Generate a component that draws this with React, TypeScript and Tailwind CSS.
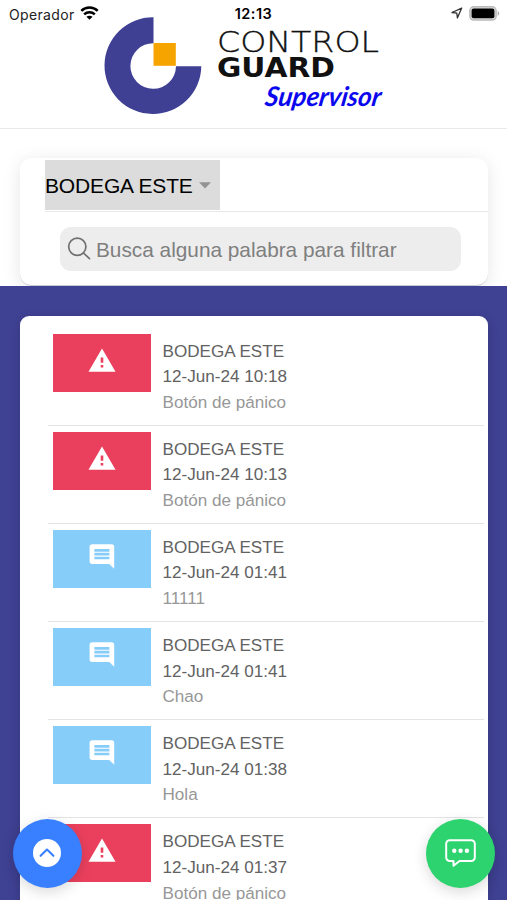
type Alert = { kind: "panic" | "note"; place: string; date: string; detail: string };

const alerts: Alert[] = [
  { kind: "panic", place: "BODEGA ESTE", date: "12-Jun-24 10:18", detail: "Botón de pánico" },
  { kind: "panic", place: "BODEGA ESTE", date: "12-Jun-24 10:13", detail: "Botón de pánico" },
  { kind: "note", place: "BODEGA ESTE", date: "12-Jun-24 01:41", detail: "11111" },
  { kind: "note", place: "BODEGA ESTE", date: "12-Jun-24 01:41", detail: "Chao" },
  { kind: "note", place: "BODEGA ESTE", date: "12-Jun-24 01:38", detail: "Hola" },
  { kind: "panic", place: "BODEGA ESTE", date: "12-Jun-24 01:37", detail: "Botón de pánico" },
];

function StatusBar() {
  return (
    <div className="absolute inset-x-0 top-0 grid h-7 grid-cols-3 items-center pl-[9px] pr-[7px] font-['Inter',sans-serif] text-[14px] text-[#222]">
      <div className="flex items-center gap-[5px]">
        <span className="tracking-[0.35px]">Operador</span>
        <svg width="19" height="14" viewBox="0 0 20 15" fill="none" stroke="#000" strokeWidth="2.7" className="-mt-[3px]">
          <path d="M1.2 5.2C6.2.4 13.8.4 18.8 5.2" />
          <path d="M4.3 8.9c3.2-3 8.2-3 11.4 0" />
          <path d="M10 14.6 6.7 11.6c1.8-1.6 4.8-1.6 6.6 0z" fill="#000" stroke="none" />
        </svg>
      </div>
      <span className="-ml-[2px] text-center text-[14.5px] font-semibold tracking-[0.5px] text-black">12:13</span>
      <div className="-mt-[2px] flex items-center justify-end gap-[6px]">
        <svg width="12" height="12" viewBox="0 0 12 12" fill="none" stroke="#333" strokeWidth="1.3" strokeLinejoin="round">
          <path d="M10.7 1.1 1 5.5l4.8.7.6 4.7z" />
        </svg>
        <svg width="31" height="15" viewBox="0 0 31 15">
          <rect x=".9" y=".8" width="26.2" height="13.2" rx="3.8" fill="#ddd" stroke="#bbb" strokeWidth="1.5" />
          <rect x="2.6" y="2.6" width="22.8" height="9.6" rx="2" />
          <path d="M28.6 5c2.2.8 2.2 4 0 4.8z" fill="#b2b2b2" />
        </svg>
      </div>
    </div>
  );
}

function Brand() {
  return (
    <svg width="290" height="104" viewBox="100 14 290 104" className="mt-[14px] ml-[100px]">
      <path d="M153.5 17.2A48.4 48.4 0 1 0 201.3 66.2H176A22.8 22.8 0 1 1 153.5 43.2z" fill="#3f4094" />
      <rect x="153.5" y="43" width="22.3" height="22.8" fill="#f5a400" />
      <g fill="#111">
        <text x="217" y="52" fontFamily="DejaVu Sans" fontWeight="200" fontSize="28.5" textLength="162" lengthAdjust="spacingAndGlyphs" stroke="#111" strokeWidth=".35">CONTROL</text>
        <text x="217" y="76.8" fontFamily="DejaVu Sans" fontWeight="700" fontSize="26.8" textLength="118" lengthAdjust="spacingAndGlyphs">GUARD</text>
      </g>
      <g transform="translate(264 105.5) skewX(-9)">
        <text fontFamily="Lato, cursive" fontStyle="italic" fontWeight="700" fontSize="27" textLength="116" lengthAdjust="spacingAndGlyphs" fill="#0b08ee">Supervisor</text>
      </g>
    </svg>
  );
}

function PanicIcon() {
  return (
    <svg width="28" height="24" viewBox="0 0 28 24" fill="#fff" className="mt-[14px]">
      <path fillRule="evenodd" d="M14 .6.5 23.8h27zM12.7 9.4h2.6v5.3h-2.6zm0 7.5h2.6v2.6h-2.6z" />
    </svg>
  );
}

function NoteIcon() {
  return (
    <svg width="26" height="25" viewBox="0 0 26 25" className="mt-[14px]">
      <path d="M3.2.3h19.4a2.6 2.6 0 0 1 2.6 2.6v21.8l-5-4.8h-17A2.6 2.6 0 0 1 .6 17.3V2.9A2.6 2.6 0 0 1 3.2.3z" fill="#fff" />
      <path d="M5.4 6.4h15M5.4 10.2h15M5.4 14h15" stroke="#87cdfa" strokeWidth="2.7" />
    </svg>
  );
}

function AlertRow({ alert, last }: { alert: Alert; last: boolean }) {
  return (
    <li className="flex h-[98.1px] shrink-0">
      <div
        className={
          alert.kind === "panic"
            ? "flex h-[58.5px] w-[97.5px] items-start justify-center bg-[#eb405d]"
            : "flex h-[58.5px] w-[97.5px] items-start justify-center bg-[#87cdfa]"
        }
      >
        {alert.kind === "panic" ? <PanicIcon /> : <NoteIcon />}
      </div>
      <div className="relative flex-1 pl-3 pt-[5px] text-[17.1px] leading-[25.8px] text-[#626262]">
        <p>{alert.place}</p>
        <p>{alert.date}</p>
        <p className="text-[#979797]">{alert.detail}</p>
        {!last && <span className="absolute -left-[103px] right-[4px] top-[91px] h-px bg-[#e4e4e4]" />}
      </div>
    </li>
  );
}

export default function App() {
  return (
    <div className="relative flex h-[900px] w-[507px] flex-col overflow-hidden bg-white font-['Liberation_Sans',Arial,sans-serif]">
      <header className="h-[129px] shrink-0 border-b border-[#e9e9e9]">
        <Brand />
      </header>
      <StatusBar />

      <section className="h-[157px] shrink-0 overflow-hidden px-5 pt-[29px]">
        <div className="h-[128px] w-[467.5px] rounded-xl border-b border-[#c9c9d8] bg-white shadow-[0_3px_18px_rgba(0,0,0,0.1)]">
          <div className="ml-[25px] flex h-[54px] items-start border-b border-[#e8e8e8] pt-[2px]">
            <button className="flex h-[50px] w-[175px] items-center gap-[6px] bg-[#dcdcdc] pt-[1px] text-[21px] whitespace-nowrap text-black">
              <span className="tracking-[-0.15px]">BODEGA ESTE</span>
              <svg width="12" height="7" viewBox="0 0 12 7" className="shrink-0">
                <path d="M0 .3h12L6 6.5z" fill="#939393" />
              </svg>
            </button>
          </div>
          <div className="mt-[15px] ml-[39.5px] flex h-[44px] w-[401px] items-center rounded-[11px] bg-[#ededed] pl-[7.5px] text-[20.8px] text-[#7f7f7f]">
            <svg width="24" height="24" viewBox="0 0 24 24" fill="none" stroke="#707070" strokeWidth="1.7" strokeLinecap="round">
              <circle cx="10.3" cy="9.8" r="8.6" />
              <path d="m16.5 16 6 5.6" />
            </svg>
            <span className="ml-[5px] pt-[2px]">Busca alguna palabra para filtrar</span>
          </div>
        </div>
      </section>

      <main className="min-h-0 flex-1 bg-[#3f4193] px-5 pt-[29.5px]">
        <ul className="flex h-[620px] w-[467.5px] flex-col rounded-t-[9px] bg-white pl-[33px] pt-[18px] shadow-[0_3px_12px_rgba(0,0,0,0.14)]">
          {alerts.map((alert, i) => (
            <AlertRow key={i} alert={alert} last={i === alerts.length - 1} />
          ))}
        </ul>
      </main>

      <button aria-label="Subir" className="absolute left-[13px] top-[819px] flex size-[68.5px] items-center justify-center rounded-full bg-[#3880ff] shadow-[0_4px_14px_rgba(0,0,0,0.15)]">
        <svg width="28" height="28" viewBox="0 0 28 28" fill="none">
          <circle cx="14" cy="14" r="14" fill="#fff" />
          <path d="m7.6 16.8 6.4-6.2 6.4 6.2" stroke="#3880ff" strokeWidth="2.1" strokeLinecap="round" strokeLinejoin="round" />
        </svg>
      </button>
      <button aria-label="Chat" className="absolute left-[426px] top-[819px] flex size-[68.5px] items-center justify-center rounded-full bg-[#2dd36f] shadow-[0_4px_14px_rgba(0,0,0,0.15)]">
        <svg width="31" height="28" viewBox="0 0 31 28" fill="none">
          <path d="M4.8 1.2h21.4a3.6 3.6 0 0 1 3.6 3.6v13.6a3.6 3.6 0 0 1-3.6 3.6H14.5l-6 4.8V22H4.8a3.6 3.6 0 0 1-3.6-3.6V4.8a3.6 3.6 0 0 1 3.6-3.6z" stroke="#fff" strokeWidth="2" strokeLinejoin="round" />
          <g fill="#fff">
            <circle cx="9.3" cy="11.8" r="2.2" />
            <circle cx="15.6" cy="11.8" r="2.2" />
            <circle cx="21.9" cy="11.8" r="2.2" />
          </g>
        </svg>
      </button>
    </div>
  );
}
